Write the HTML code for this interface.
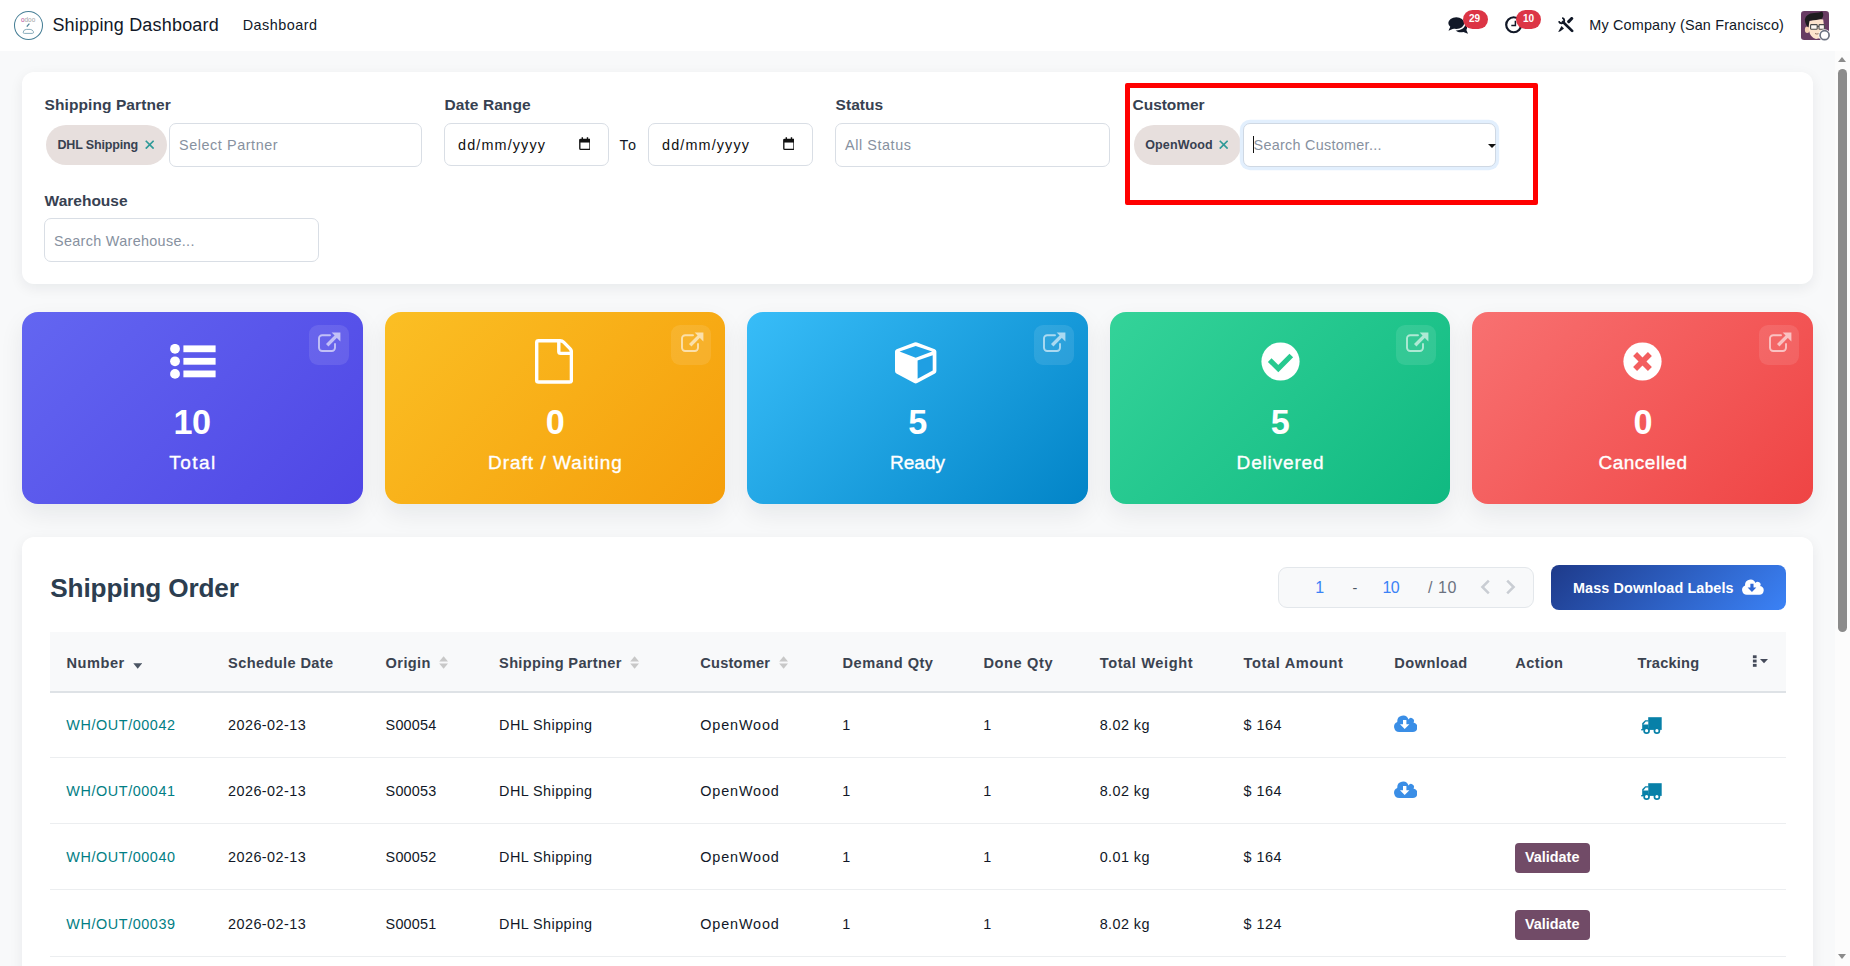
<!DOCTYPE html>
<html lang="en">
<head>
<meta charset="utf-8">
<title>Shipping Dashboard</title>
<style>
*{box-sizing:border-box;margin:0;padding:0}
html,body{width:1850px;height:966px;overflow:hidden}
body{font-family:"Liberation Sans",sans-serif;background:#f8f9fa;color:#111827;position:relative;font-size:14.4px}
.abs{position:absolute}
.t{position:absolute;line-height:1;white-space:nowrap}
#nav{position:absolute;left:0;top:0;width:1850px;height:51px;background:#fff}
.badge{position:absolute;height:19px;border-radius:9.5px;background:#dc3545}
#sb{position:absolute;left:1835px;top:51px;width:15px;height:915px;background:#fcfcfc}
#sb .thumb{position:absolute;left:3px;top:17.5px;width:9px;height:563px;border-radius:4.5px;background:#8b8b8b}
#sb .up{position:absolute;left:3px;top:6px;width:0;height:0;border-left:4.5px solid transparent;border-right:4.5px solid transparent;border-bottom:5px solid #8b8b8b}
#sb .down{position:absolute;left:3px;top:903px;width:0;height:0;border-left:4.5px solid transparent;border-right:4.5px solid transparent;border-top:5px solid #8b8b8b}
.card{position:absolute;background:#fff;border-radius:12px;box-shadow:0 4px 14px rgba(15,23,42,.07)}
.inp{position:absolute;height:44px;border:1px solid #d9dee5;border-radius:7px;background:#fff}
.inp.focus{border-color:#cfd8e3;box-shadow:0 0 0 3.2px #e2effd}
.tag{position:absolute;height:40px;border-radius:20px;background:#e7dfdd}
.kpi{position:absolute;top:312px;width:340.6px;height:192px;border-radius:16px;color:#fff;box-shadow:0 10px 24px rgba(15,23,42,.075)}
.k1{background:linear-gradient(135deg,#6366f1,#4f46e5)}
.k2{background:linear-gradient(135deg,#fbbf24,#f59e0b)}
.k3{background:linear-gradient(135deg,#38bdf8,#0284c7)}
.k4{background:linear-gradient(135deg,#34d399,#10b981)}
.k5{background:linear-gradient(135deg,#f87171,#ef4444)}
.ext{position:absolute;width:40px;height:40px;border-radius:9px;background:rgba(255,255,255,.1);top:325px}
.ext svg{position:absolute;left:8.5px;top:7px;opacity:.6}
.hl{position:absolute;height:1px;background:#eceef0;left:50px;width:1736px}
.vbtn{position:absolute;left:1515px;width:75px;height:30px;border-radius:4px;background:#714b67}
</style>
</head>
<body>
<header class="o_main_navbar">
<div id="nav">
<svg class="abs" style="left:13px;top:10px" width="31" height="31" viewBox="0 0 31 31"><circle cx="15.5" cy="15.4" r="14" fill="#fff" stroke="#477f96" stroke-width="1.050"/><text x="8" y="11.800" font-family="Liberation Sans, sans-serif" font-size="6.400" fill="#a3a3a3"><tspan fill="#b54a9c">o</tspan>doo</text><path d="M13.8 16.6L16.4 13.6" stroke="#4d8298" stroke-width="1.3"/><path d="M10.2 22.2q.4-2.6 3-2.8h4q2.4.2 3.2 2.2.6 1.6-1 1.8H11.4q-1.4 0-1.2-1.2z" fill="none" stroke="#7ba3b3" stroke-width=".9"/></svg>
</div>
<span class="t" style="left:52.4px;top:16.3px;font-size:18px;color:#111827;letter-spacing:0.19px;">Shipping Dashboard</span>
<span class="t" style="left:242.7px;top:17.7px;font-size:14.4px;color:#111827;letter-spacing:0.48px;">Dashboard</span>
<span class="t" style="left:1589.3px;top:17.7px;font-size:14.4px;color:#111827;letter-spacing:0.17px;">My Company (San Francisco)</span>
<svg class="abs" style="left:1447px;top:16px" width="22" height="19" viewBox="0 0 22 19"><ellipse cx="9.300" cy="7.100" rx="8" ry="5.800" fill="#111827"/><path d="M3.400 10.400L1.500 14.800 7.400 12.300z" fill="#111827"/><path d="M18.400 8.800C20.200 10.100 20.600 12.200 19.400 13.900L21 17.800 16.400 15.900C13.600 16.700 10.600 16.100 8.600 14.400 12.600 14.800 17.200 12.900 18.400 8.800z" fill="#111827"/></svg>
<div class="badge" style="left:1463px;top:10px;width:24.7px"></div>
<span class="t" style="left:1469.4px;top:13.2px;font-size:10.6px;color:#fff;font-weight:700;transform:scaleX(.95);transform-origin:0 0;">29</span>
<svg class="abs" style="left:1504.500px;top:16px" width="18" height="18" viewBox="0 0 18 18"><circle cx="8.700" cy="8.750" r="7.500" fill="none" stroke="#111827" stroke-width="2.200"/><path d="M10.400 4.700V9.500H6.300" fill="none" stroke="#111827" stroke-width="1.500"/></svg>
<div class="badge" style="left:1515.8px;top:10px;width:25.2px"></div>
<span class="t" style="left:1522.7px;top:13.2px;font-size:10.6px;color:#fff;font-weight:700;transform:scaleX(.95);transform-origin:0 0;">10</span>
<svg class="abs" style="left:1557.900px;top:17px" width="16" height="15.500" viewBox="0 0 16 15.500"><path d="M4.200 0.900A2.700 2.700 0 1 1 0.900 4.200" fill="none" stroke="#111827" stroke-width="1.900"/><path d="M5 5L14.100 13.900" stroke="#111827" stroke-width="2.700" stroke-linecap="round"/><path d="M13.700 1.500L10.700 4.600" stroke="#111827" stroke-width="3.100" stroke-linecap="round"/><path d="M3.500 9.100L6 11.400 2.400 14.200 0.100 15z" fill="#111827"/></svg>
<svg class="abs" style="left:1801px;top:11px" width="32" height="32" viewBox="0 0 32 32"><defs><clipPath id="av"><rect x="0" y="0" width="28" height="29" rx="3.200"/></clipPath></defs><g clip-path="url(#av)"><rect x="0" y="0" width="28" height="29" fill="#683b63"/><ellipse cx="6.200" cy="18.800" rx="2.300" ry="3.200" fill="#f6cfb4"/><path d="M7.200 10.500Q14 7.500 22.200 8.500L23.500 19Q22.500 27.500 15 28 9.500 27 7.800 19z" fill="#fde3cd"/><path d="M3.800 8.500Q5 2.500 13 2 18.500 2 21.300 0.600 23.500 4.500 20.800 7.800 14.500 9.800 8.600 9.600L7.400 16.500Q4.200 13.500 3.800 8.500z" fill="#1d1b1e"/><rect x="9.600" y="13.600" width="6.600" height="4.600" rx=".8" fill="#fff" fill-opacity=".75" stroke="#4a4a4a" stroke-width="1.100"/><rect x="18" y="13.600" width="5.400" height="4.600" rx=".8" fill="#fff" fill-opacity=".75" stroke="#4a4a4a" stroke-width="1.100"/><path d="M16.200 15.400h1.800" stroke="#4a4a4a" stroke-width="1"/><path d="M14 22.500q1.800 1 3.600 .2" stroke="#8a6a5c" stroke-width=".9" fill="none"/></g><circle cx="23.600" cy="24.200" r="6" fill="#fff"/><circle cx="23.600" cy="24.200" r="4.500" fill="#fff" stroke="#6b7280" stroke-width="1.700"/></svg>
</header>
<main class="shipping-dashboard">
<section class="filters">
<div class="card" style="left:22px;top:72px;width:1791px;height:212px"></div>
<span class="t" style="left:44.6px;top:97.3px;font-size:15.5px;color:#374151;letter-spacing:0.08px;font-weight:700;">Shipping Partner</span>
<span class="t" style="left:444.6px;top:97.3px;font-size:15.5px;color:#374151;letter-spacing:0.08px;font-weight:700;">Date Range</span>
<span class="t" style="left:835.6px;top:97.3px;font-size:15.5px;color:#374151;letter-spacing:0.03px;font-weight:700;">Status</span>
<span class="t" style="left:1132.6px;top:97.3px;font-size:15.5px;color:#374151;letter-spacing:-0.05px;font-weight:700;">Customer</span>
<span class="t" style="left:44.6px;top:192.5px;font-size:15.5px;color:#374151;font-weight:700;">Warehouse</span>
<div class="tag" style="left:46px;top:125px;width:121px"></div>
<span class="t" style="left:57.4px;top:139.1px;font-size:12.5px;color:#374151;letter-spacing:-0.15px;font-weight:700;">DHL Shipping</span>
<svg class="abs" style="left:144.6px;top:140px" width="9.400" height="9.400" viewBox="0 0 10 10"><path d="M0.800 0.800L9.200 9.200M9.200 0.800L0.800 9.200" stroke="#2f9a98" stroke-width="1.800" fill="none"/></svg>
<div class="inp" style="left:169px;top:123px;width:253px"></div>
<span class="t" style="left:179.0px;top:137.6px;font-size:14.4px;color:#8791a0;letter-spacing:0.57px;">Select Partner</span>
<div class="inp" style="left:444px;top:123px;width:165px;height:43px"></div>
<span class="t" style="left:458.0px;top:137.8px;font-size:14.4px;color:#111;letter-spacing:1.13px;">dd/mm/yyyy</span>
<svg class="abs" style="left:578.7px;top:137.400px" width="11.800" height="13.400" viewBox="0 0 13 15"><path d="M1.800 2.600h9.400a1 1 0 0 1 1 1v9.200a1 1 0 0 1-1 1H1.800a1 1 0 0 1-1-1V3.600a1 1 0 0 1 1-1z" fill="none" stroke="#111" stroke-width="1.500"/><path d="M0.800 3h11.400v3.200H0.800z" fill="#111"/><path d="M3.600 0.400v3M9.400 0.400v3" stroke="#111" stroke-width="1.600"/></svg>
<span class="t" style="left:619.5px;top:137.6px;font-size:14.4px;color:#111827;letter-spacing:1.29px;">To</span>
<div class="inp" style="left:648px;top:123px;width:165px;height:43px"></div>
<span class="t" style="left:662.0px;top:137.8px;font-size:14.4px;color:#111;letter-spacing:1.13px;">dd/mm/yyyy</span>
<svg class="abs" style="left:782.7px;top:137.400px" width="11.800" height="13.400" viewBox="0 0 13 15"><path d="M1.800 2.600h9.400a1 1 0 0 1 1 1v9.200a1 1 0 0 1-1 1H1.800a1 1 0 0 1-1-1V3.600a1 1 0 0 1 1-1z" fill="none" stroke="#111" stroke-width="1.500"/><path d="M0.800 3h11.400v3.200H0.800z" fill="#111"/><path d="M3.600 0.400v3M9.400 0.400v3" stroke="#111" stroke-width="1.600"/></svg>
<div class="inp" style="left:835px;top:123px;width:275px"></div>
<span class="t" style="left:845.0px;top:137.6px;font-size:14.4px;color:#8791a0;letter-spacing:0.57px;">All Status</span>
<div class="tag" style="left:1134px;top:125px;width:107px"></div>
<span class="t" style="left:1145.2px;top:139.1px;font-size:12.5px;color:#374151;letter-spacing:0.15px;font-weight:700;">OpenWood</span>
<svg class="abs" style="left:1218.6px;top:140px" width="9.400" height="9.400" viewBox="0 0 10 10"><path d="M0.800 0.800L9.200 9.200M9.200 0.800L0.800 9.200" stroke="#2f9a98" stroke-width="1.800" fill="none"/></svg>
<div class="inp focus" style="left:1243px;top:123px;width:253px"></div>
<span class="t" style="left:1253.5px;top:137.6px;font-size:14.4px;color:#8791a0;letter-spacing:0.28px;">Search Customer...</span>
<div class="abs" style="left:1253px;top:136px;width:1px;height:16.500px;background:#111"></div>
<div class="abs" style="left:1488px;top:144px;width:0;height:0;border-left:4px solid transparent;border-right:4px solid transparent;border-top:4px solid #111"></div>
<div class="inp" style="left:44px;top:218px;width:275px"></div>
<span class="t" style="left:54.0px;top:233.6px;font-size:14.4px;color:#8791a0;letter-spacing:0.32px;">Search Warehouse...</span>
<div class="abs" style="left:1125px;top:83px;width:413px;height:122px;border:5px solid #ff0000;border-radius:2px"></div>
</section>
<section class="kpi-cards">
<div class="kpi k1" style="left:22px"></div>
<div class="ext" style="left:308.6px"><svg width="24" height="21" viewBox="0 0 24 21"><path d="M13 3.200H5.200a3.200 3.200 0 0 0-3.200 3.200v9.400a3.200 3.200 0 0 0 3.200 3.200h9.600a3.200 3.200 0 0 0 3.200-3.200V12" fill="none" stroke="#fff" stroke-width="1.900" stroke-linecap="round"/><path d="M10.200 13.200L20 3.400" stroke="#fff" stroke-width="3.400" fill="none"/><path d="M14.600 0.600H23.400V9.400L20.400 6.400 17.600 3.600z" fill="#fff"/></svg></div>
<svg class="abs" style="left:169.6px;top:344px" width="46" height="35" viewBox="0 0 46 35"><circle cx="5" cy="4.800" r="4.900" fill="#fff"/><circle cx="5" cy="17.300" r="4.900" fill="#fff"/><circle cx="5" cy="29.900" r="4.900" fill="#fff"/><rect x="13.400" y="1.400" width="32.200" height="6.800" fill="#fff"/><rect x="13.400" y="13.900" width="32.200" height="6.800" fill="#fff"/><rect x="13.400" y="26.500" width="32.200" height="6.800" fill="#fff"/></svg>
<span class="t" style="left:173.5px;top:405.3px;font-size:34.2px;color:#fff;letter-spacing:-0.44px;font-weight:700;">10</span>
<span class="t" style="left:169.3px;top:453.3px;font-size:19px;color:#fff;letter-spacing:1.47px;-webkit-text-stroke:.35px #fff;">Total</span>
<div class="kpi k2" style="left:384.6px"></div>
<div class="ext" style="left:671.2px"><svg width="24" height="21" viewBox="0 0 24 21"><path d="M13 3.200H5.200a3.200 3.200 0 0 0-3.200 3.200v9.400a3.200 3.200 0 0 0 3.200 3.200h9.600a3.200 3.200 0 0 0 3.200-3.200V12" fill="none" stroke="#fff" stroke-width="1.900" stroke-linecap="round"/><path d="M10.200 13.200L20 3.400" stroke="#fff" stroke-width="3.400" fill="none"/><path d="M14.600 0.600H23.400V9.400L20.400 6.400 17.600 3.600z" fill="#fff"/></svg></div>
<svg class="abs" style="left:535.4px;top:339px" width="38" height="45" viewBox="0 0 38 45"><path d="M3.600 1.700H25.200Q27.200 1.700 28.600 3.100L35 9.600Q36.400 11 36.400 13V41.400Q36.400 43 34.600 43H3.600Q1.700 43 1.700 41.400V3.400Q1.700 1.700 3.600 1.700Z" fill="none" stroke="#fff" stroke-width="3.400" stroke-linejoin="round"/><path d="M23.800 2V12.600Q23.800 14.400 25.600 14.400H36" fill="none" stroke="#fff" stroke-width="3.400"/></svg>
<span class="t" style="left:545.7px;top:405.3px;font-size:34.2px;color:#fff;letter-spacing:-0.52px;font-weight:700;">0</span>
<span class="t" style="left:487.9px;top:453.3px;font-size:19px;color:#fff;letter-spacing:1.02px;-webkit-text-stroke:.35px #fff;">Draft / Waiting</span>
<div class="kpi k3" style="left:747.2px"></div>
<div class="ext" style="left:1033.8px"><svg width="24" height="21" viewBox="0 0 24 21"><path d="M13 3.200H5.200a3.200 3.200 0 0 0-3.200 3.200v9.400a3.200 3.200 0 0 0 3.200 3.200h9.600a3.200 3.200 0 0 0 3.200-3.200V12" fill="none" stroke="#fff" stroke-width="1.900" stroke-linecap="round"/><path d="M10.200 13.200L20 3.400" stroke="#fff" stroke-width="3.400" fill="none"/><path d="M14.600 0.600H23.400V9.400L20.400 6.400 17.600 3.600z" fill="#fff"/></svg></div>
<svg class="abs" style="left:895.2px;top:342px" width="42" height="42" viewBox="0 0 42 42"><path d="M19.400 0.500Q20.700 0 22 0.500L39.800 7.200Q41.400 7.900 41.400 9.600V29Q41.400 30.600 40 31.400L22.200 41Q20.700 41.800 19.200 41L1.400 31.400Q0 30.600 0 29V9.600Q0 7.900 1.600 7.200Z" fill="#fff"/><path d="M20.700 4L37.100 9.600 20.700 15.800 4.600 9.600Z" fill="#22a4e7"/><path d="M22.600 18.600L37.700 13.200V28.400L22.600 36.800Z" fill="#1f9fe3"/></svg>
<span class="t" style="left:908.2px;top:405.3px;font-size:34.2px;color:#fff;letter-spacing:-0.52px;font-weight:700;">5</span>
<span class="t" style="left:890.0px;top:453.3px;font-size:19px;color:#fff;letter-spacing:0.02px;-webkit-text-stroke:.35px #fff;">Ready</span>
<div class="kpi k4" style="left:1109.8px"></div>
<div class="ext" style="left:1396.4px"><svg width="24" height="21" viewBox="0 0 24 21"><path d="M13 3.200H5.200a3.200 3.200 0 0 0-3.200 3.200v9.400a3.200 3.200 0 0 0 3.200 3.200h9.600a3.200 3.200 0 0 0 3.200-3.200V12" fill="none" stroke="#fff" stroke-width="1.900" stroke-linecap="round"/><path d="M10.200 13.200L20 3.400" stroke="#fff" stroke-width="3.400" fill="none"/><path d="M14.600 0.600H23.400V9.400L20.400 6.400 17.600 3.600z" fill="#fff"/></svg></div>
<svg class="abs" style="left:1260.6px;top:341.800px" width="39" height="39" viewBox="-19.500 -19.500 39 39"><circle cx="0" cy="0" r="19.100" fill="#fff"/><path d="M-10.800 -1.400L-2.200 7L10.800 -6" fill="none" stroke="#27c98f" stroke-width="5.200"/></svg>
<span class="t" style="left:1270.8px;top:405.3px;font-size:34.2px;color:#fff;letter-spacing:-0.52px;font-weight:700;">5</span>
<span class="t" style="left:1236.6px;top:453.3px;font-size:19px;color:#fff;letter-spacing:0.84px;-webkit-text-stroke:.35px #fff;">Delivered</span>
<div class="kpi k5" style="left:1472.4px"></div>
<div class="ext" style="left:1759.0px"><svg width="24" height="21" viewBox="0 0 24 21"><path d="M13 3.200H5.200a3.200 3.200 0 0 0-3.200 3.200v9.400a3.200 3.200 0 0 0 3.200 3.200h9.600a3.200 3.200 0 0 0 3.200-3.200V12" fill="none" stroke="#fff" stroke-width="1.900" stroke-linecap="round"/><path d="M10.200 13.200L20 3.400" stroke="#fff" stroke-width="3.400" fill="none"/><path d="M14.600 0.600H23.400V9.400L20.400 6.400 17.600 3.600z" fill="#fff"/></svg></div>
<svg class="abs" style="left:1623.2px;top:341.700px" width="39" height="39" viewBox="-19.500 -19.500 39 39"><circle cx="0" cy="0" r="19.100" fill="#fff"/><path d="M-7.400 -7.400L7.400 7.400M7.400 -7.400L-7.400 7.400" fill="none" stroke="#f35e5f" stroke-width="5.600"/></svg>
<span class="t" style="left:1633.5px;top:405.3px;font-size:34.2px;color:#fff;letter-spacing:-0.52px;font-weight:700;">0</span>
<span class="t" style="left:1598.5px;top:453.3px;font-size:19px;color:#fff;letter-spacing:0.50px;-webkit-text-stroke:.35px #fff;">Cancelled</span>
</section>
<section class="shipping-orders">
<div class="card" style="left:22px;top:536.800px;width:1791px;height:470px"></div>
<span class="t" style="left:50.3px;top:574.7px;font-size:26.2px;color:#2c3e50;letter-spacing:-0.15px;font-weight:700;">Shipping Order</span>
<div class="abs" style="left:1278px;top:567px;width:256px;height:41px;border:1px solid #e3e7eb;border-radius:9px;background:#f8f9fa"></div>
<span class="t" style="left:1315.2px;top:579.6px;font-size:16px;color:#3b82f6;">1</span>
<span class="t" style="left:1352.6px;top:580.9px;font-size:14.4px;color:#4b5563;">-</span>
<span class="t" style="left:1382.6px;top:579.6px;font-size:16px;color:#3b82f6;letter-spacing:-0.80px;">10</span>
<span class="t" style="left:1428.0px;top:579.6px;font-size:16px;color:#6b7280;letter-spacing:0.54px;">/ 10</span>
<svg class="abs" style="left:1480px;top:579px" width="36" height="16" viewBox="0 0 36 16"><path d="M8.800 1.600L2.400 8 8.800 14.400" fill="none" stroke="#c9cdd3" stroke-width="2.500"/><path d="M27.200 1.600L33.600 8 27.200 14.400" fill="none" stroke="#c9cdd3" stroke-width="2.500"/></svg>
<div class="abs" style="left:1551px;top:565px;width:235px;height:44.500px;border-radius:8px;background:linear-gradient(135deg,#1e3a8a,#3b82f6)"></div>
<span class="t" style="left:1573.0px;top:580.5px;font-size:14.4px;color:#fff;letter-spacing:0.12px;font-weight:700;">Mass Download Labels</span>
<svg class="abs" style="left:1742.4px;top:578.9px" width="21.4" height="15.8" viewBox="0 0 23 17"><path d="M5.200 17A5.200 5.200 0 0 1 3.300 7A5.800 5.800 0 0 1 14.500 4.400A2.900 2.900 0 0 1 19.500 7.500A4.800 4.800 0 0 1 18.400 17z" fill="#fff"/><path d="M9 5h3.400v4.200h3L10.700 14 6 9.200h3z" fill="#2f68d6"/></svg>
<div class="abs" style="left:50px;top:632px;width:1736px;height:59px;background:#f8f9fa"></div>
<div class="abs" style="left:50px;top:691px;width:1736px;height:2px;background:#dee2e6"></div>
<span class="t" style="left:66.6px;top:656.0px;font-size:14.6px;color:#3b4350;letter-spacing:0.49px;font-weight:700;">Number</span>
<span class="t" style="left:228.1px;top:656.0px;font-size:14.6px;color:#3b4350;letter-spacing:0.38px;font-weight:700;">Schedule Date</span>
<span class="t" style="left:385.6px;top:656.0px;font-size:14.6px;color:#3b4350;letter-spacing:0.38px;font-weight:700;">Origin</span>
<span class="t" style="left:499.1px;top:656.0px;font-size:14.6px;color:#3b4350;letter-spacing:0.31px;font-weight:700;">Shipping Partner</span>
<span class="t" style="left:700.3px;top:656.0px;font-size:14.6px;color:#3b4350;letter-spacing:0.22px;font-weight:700;">Customer</span>
<span class="t" style="left:842.5px;top:656.0px;font-size:14.6px;color:#3b4350;letter-spacing:0.50px;font-weight:700;">Demand Qty</span>
<span class="t" style="left:983.4px;top:656.0px;font-size:14.6px;color:#3b4350;letter-spacing:0.61px;font-weight:700;">Done Qty</span>
<span class="t" style="left:1099.7px;top:656.0px;font-size:14.6px;color:#3b4350;letter-spacing:0.61px;font-weight:700;">Total Weight</span>
<span class="t" style="left:1243.5px;top:656.0px;font-size:14.6px;color:#3b4350;letter-spacing:0.64px;font-weight:700;">Total Amount</span>
<span class="t" style="left:1394.3px;top:656.0px;font-size:14.6px;color:#3b4350;letter-spacing:0.46px;font-weight:700;">Download</span>
<span class="t" style="left:1515.3px;top:656.0px;font-size:14.6px;color:#3b4350;letter-spacing:0.46px;font-weight:700;">Action</span>
<span class="t" style="left:1637.6px;top:656.0px;font-size:14.6px;color:#3b4350;letter-spacing:0.22px;font-weight:700;">Tracking</span>
<svg class="abs" style="left:132.600px;top:663.200px" width="9.400" height="6" viewBox="0 0 9.400 6"><path d="M0.300 0.300H9.100L4.700 5.700z" fill="#4b5563"/></svg>
<svg class="abs" style="left:439px;top:656.200px" width="9.200" height="13" viewBox="0 0 9.200 13"><path d="M0.200 5.400L4.600 0.200 9 5.400z" fill="#c8c8c8"/><path d="M0.200 7.600L4.600 12.800 9 7.600z" fill="#c8c8c8"/></svg>
<svg class="abs" style="left:630px;top:656.200px" width="9.200" height="13" viewBox="0 0 9.200 13"><path d="M0.200 5.400L4.600 0.200 9 5.400z" fill="#c8c8c8"/><path d="M0.200 7.600L4.600 12.800 9 7.600z" fill="#c8c8c8"/></svg>
<svg class="abs" style="left:778.8px;top:656.200px" width="9.200" height="13" viewBox="0 0 9.200 13"><path d="M0.200 5.400L4.600 0.200 9 5.400z" fill="#c8c8c8"/><path d="M0.200 7.600L4.600 12.800 9 7.600z" fill="#c8c8c8"/></svg>
<svg class="abs" style="left:1752px;top:655px" width="17" height="13" viewBox="0 0 17 13"><rect x="0.900" y="0.300" width="3.700" height="2.900" fill="#454b5a"/><rect x="0.900" y="4.600" width="3.700" height="2.900" fill="#454b5a"/><rect x="0.900" y="8.900" width="3.700" height="2.900" fill="#454b5a"/><path d="M8 4.100h8L12 8.200z" fill="#454b5a"/></svg>
<span class="t" style="left:66.3px;top:717.8px;font-size:14.4px;color:#017e84;letter-spacing:0.58px;">WH/OUT/00042</span>
<span class="t" style="left:228.1px;top:717.8px;font-size:14.4px;color:#111827;letter-spacing:0.44px;">2026-02-13</span>
<span class="t" style="left:385.6px;top:717.8px;font-size:14.4px;color:#111827;letter-spacing:0.19px;">S00054</span>
<span class="t" style="left:499.1px;top:717.8px;font-size:14.4px;color:#111827;letter-spacing:0.43px;">DHL Shipping</span>
<span class="t" style="left:700.3px;top:717.8px;font-size:14.4px;color:#111827;letter-spacing:0.86px;">OpenWood</span>
<span class="t" style="left:842.2px;top:717.8px;font-size:14.4px;color:#111827;">1</span>
<span class="t" style="left:983.2px;top:717.8px;font-size:14.4px;color:#111827;">1</span>
<span class="t" style="left:1099.7px;top:717.8px;font-size:14.4px;color:#111827;letter-spacing:0.43px;">8.02 kg</span>
<span class="t" style="left:1243.5px;top:717.8px;font-size:14.4px;color:#111827;letter-spacing:0.47px;">$ 164</span>
<svg class="abs" style="left:1393.9px;top:715.1px" width="23" height="17" viewBox="0 0 23 17"><path d="M5.200 17A5.200 5.200 0 0 1 3.300 7A5.800 5.800 0 0 1 14.500 4.400A2.900 2.900 0 0 1 19.500 7.500A4.800 4.800 0 0 1 18.400 17z" fill="#3a8ee6"/><path d="M9 5h3.400v4.200h3L10.700 14 6 9.200h3z" fill="#fff"/></svg>
<svg class="abs" style="left:1640.800px;top:716.8px" width="21" height="18" viewBox="0 0 21 18"><path d="M7.200 0.200H20.700V12.900H7.200z" fill="#0780a8"/><path d="M1.200 6.200L4.200 3.200H7.400V12.900H1.200z" fill="#0780a8"/><path d="M0.200 12h2v1.400h-2z" fill="#0780a8"/><path d="M2.300 7.500L4.800 4.600H7.200V7.500z" fill="#fff"/><circle cx="5.600" cy="13.700" r="3.300" fill="#0780a8"/><circle cx="15.900" cy="13.700" r="3.300" fill="#0780a8"/><circle cx="5.600" cy="13.700" r="1.600" fill="#fff"/><circle cx="15.900" cy="13.700" r="1.600" fill="#fff"/></svg>
<div class="hl" style="top:756.9px"></div>
<span class="t" style="left:66.3px;top:783.8px;font-size:14.4px;color:#017e84;letter-spacing:0.58px;">WH/OUT/00041</span>
<span class="t" style="left:228.1px;top:783.8px;font-size:14.4px;color:#111827;letter-spacing:0.44px;">2026-02-13</span>
<span class="t" style="left:385.6px;top:783.8px;font-size:14.4px;color:#111827;letter-spacing:0.19px;">S00053</span>
<span class="t" style="left:499.1px;top:783.8px;font-size:14.4px;color:#111827;letter-spacing:0.43px;">DHL Shipping</span>
<span class="t" style="left:700.3px;top:783.8px;font-size:14.4px;color:#111827;letter-spacing:0.86px;">OpenWood</span>
<span class="t" style="left:842.2px;top:783.8px;font-size:14.4px;color:#111827;">1</span>
<span class="t" style="left:983.2px;top:783.8px;font-size:14.4px;color:#111827;">1</span>
<span class="t" style="left:1099.7px;top:783.8px;font-size:14.4px;color:#111827;letter-spacing:0.43px;">8.02 kg</span>
<span class="t" style="left:1243.5px;top:783.8px;font-size:14.4px;color:#111827;letter-spacing:0.47px;">$ 164</span>
<svg class="abs" style="left:1393.9px;top:781.1px" width="23" height="17" viewBox="0 0 23 17"><path d="M5.200 17A5.200 5.200 0 0 1 3.300 7A5.800 5.800 0 0 1 14.500 4.400A2.900 2.900 0 0 1 19.500 7.500A4.800 4.800 0 0 1 18.400 17z" fill="#3a8ee6"/><path d="M9 5h3.400v4.200h3L10.700 14 6 9.200h3z" fill="#fff"/></svg>
<svg class="abs" style="left:1640.800px;top:782.8px" width="21" height="18" viewBox="0 0 21 18"><path d="M7.200 0.200H20.700V12.900H7.200z" fill="#0780a8"/><path d="M1.200 6.200L4.200 3.200H7.400V12.900H1.200z" fill="#0780a8"/><path d="M0.200 12h2v1.400h-2z" fill="#0780a8"/><path d="M2.300 7.500L4.800 4.600H7.200V7.500z" fill="#fff"/><circle cx="5.600" cy="13.700" r="3.300" fill="#0780a8"/><circle cx="15.900" cy="13.700" r="3.300" fill="#0780a8"/><circle cx="5.600" cy="13.700" r="1.600" fill="#fff"/><circle cx="15.900" cy="13.700" r="1.600" fill="#fff"/></svg>
<div class="hl" style="top:822.6px"></div>
<span class="t" style="left:66.3px;top:849.8px;font-size:14.4px;color:#017e84;letter-spacing:0.58px;">WH/OUT/00040</span>
<span class="t" style="left:228.1px;top:849.8px;font-size:14.4px;color:#111827;letter-spacing:0.44px;">2026-02-13</span>
<span class="t" style="left:385.6px;top:849.8px;font-size:14.4px;color:#111827;letter-spacing:0.19px;">S00052</span>
<span class="t" style="left:499.1px;top:849.8px;font-size:14.4px;color:#111827;letter-spacing:0.43px;">DHL Shipping</span>
<span class="t" style="left:700.3px;top:849.8px;font-size:14.4px;color:#111827;letter-spacing:0.86px;">OpenWood</span>
<span class="t" style="left:842.2px;top:849.8px;font-size:14.4px;color:#111827;">1</span>
<span class="t" style="left:983.2px;top:849.8px;font-size:14.4px;color:#111827;">1</span>
<span class="t" style="left:1099.7px;top:849.8px;font-size:14.4px;color:#111827;letter-spacing:0.43px;">0.01 kg</span>
<span class="t" style="left:1243.5px;top:849.8px;font-size:14.4px;color:#111827;letter-spacing:0.47px;">$ 164</span>
<div class="vbtn" style="top:843.0px"></div>
<span class="t" style="left:1525.0px;top:849.8px;font-size:14.4px;color:#fff;font-weight:700;">Validate</span>
<div class="hl" style="top:888.6px"></div>
<span class="t" style="left:66.3px;top:916.8px;font-size:14.4px;color:#017e84;letter-spacing:0.58px;">WH/OUT/00039</span>
<span class="t" style="left:228.1px;top:916.8px;font-size:14.4px;color:#111827;letter-spacing:0.44px;">2026-02-13</span>
<span class="t" style="left:385.6px;top:916.8px;font-size:14.4px;color:#111827;letter-spacing:0.19px;">S00051</span>
<span class="t" style="left:499.1px;top:916.8px;font-size:14.4px;color:#111827;letter-spacing:0.43px;">DHL Shipping</span>
<span class="t" style="left:700.3px;top:916.8px;font-size:14.4px;color:#111827;letter-spacing:0.86px;">OpenWood</span>
<span class="t" style="left:842.2px;top:916.8px;font-size:14.4px;color:#111827;">1</span>
<span class="t" style="left:983.2px;top:916.8px;font-size:14.4px;color:#111827;">1</span>
<span class="t" style="left:1099.7px;top:916.8px;font-size:14.4px;color:#111827;letter-spacing:0.43px;">8.02 kg</span>
<span class="t" style="left:1243.5px;top:916.8px;font-size:14.4px;color:#111827;letter-spacing:0.47px;">$ 124</span>
<div class="vbtn" style="top:910.0px"></div>
<span class="t" style="left:1525.0px;top:916.8px;font-size:14.4px;color:#fff;font-weight:700;">Validate</span>
<div class="hl" style="top:955.8px"></div>
</section>
</main>
<div id="sb"><div class="up"></div><div class="thumb"></div><div class="down"></div></div>
</body>
</html>
